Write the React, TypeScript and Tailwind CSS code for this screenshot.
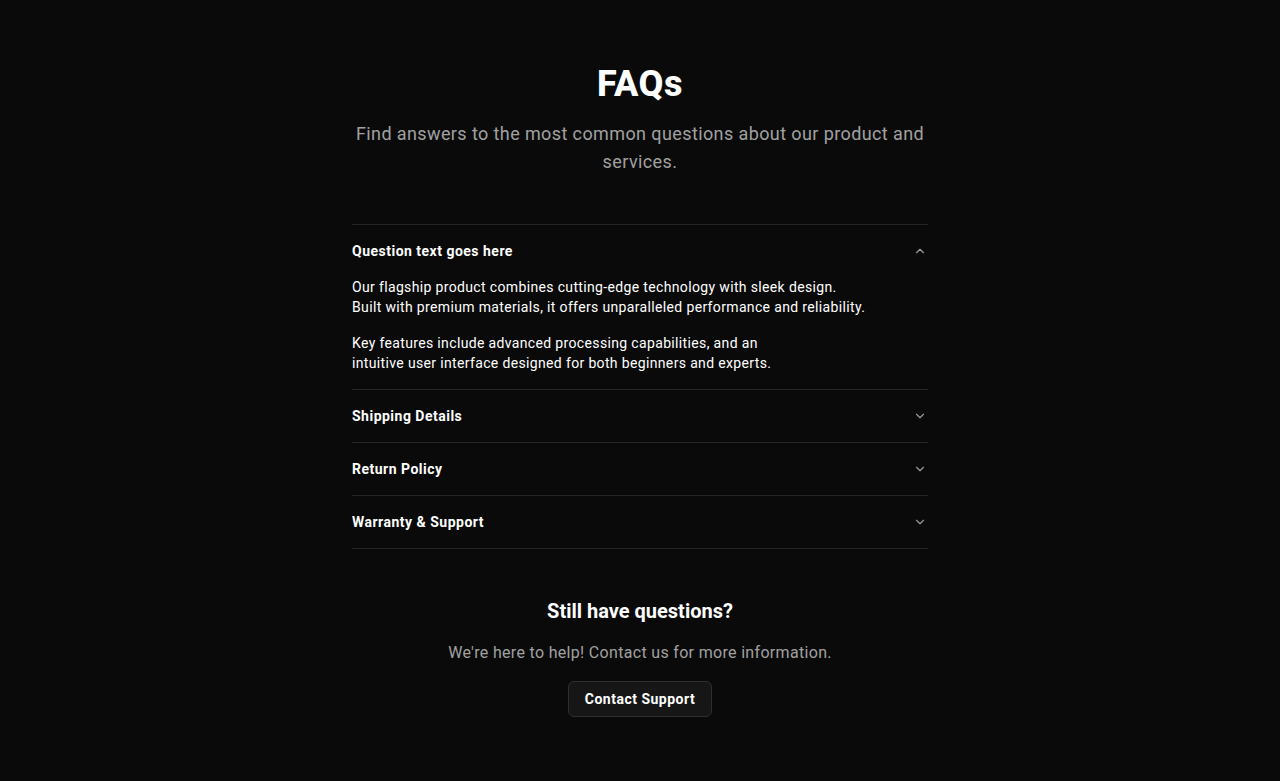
import React, { useState } from "react";
import { ChevronDown } from "lucide-react";

const items = [
  { q: "Question text goes here" },
  { q: "Shipping Details" },
  { q: "Return Policy" },
  { q: "Warranty & Support" },
];

export default function App() {
  const [open, setOpen] = useState<number | null>(0);
  return (
    <div
      className="min-h-[781px] w-full bg-[#0a0a0a] text-white"
      style={{ fontFamily: "Roboto, 'Noto Sans', sans-serif" }}
    >
      <div className="mx-auto max-w-xl pt-16 pb-16">
        <h1 className="text-center text-4xl font-extrabold leading-10 tracking-[0.015em]">FAQs</h1>
        <p className="mt-4 text-center text-lg leading-7 tracking-[0.022em] text-[#a1a1a1]">
          Find answers to the most common questions about our product and services.
        </p>
        <div className="mt-12 border-t border-[#262626]">
          {items.map((it, i) => {
            const isOpen = open === i;
            return (
              <div key={it.q} className="border-b border-[#262626]">
                <button
                  onClick={() => setOpen(isOpen ? null : i)}
                  className="flex w-full items-center justify-between py-4 text-left text-sm font-bold leading-5 tracking-[0.035em]"
                >
                  <span>{it.q}</span>
                  <ChevronDown
                    className={`mr-px h-[14px] w-[14px] text-[#9a9a9a] ${isOpen ? "rotate-180" : ""}`}
                    strokeWidth={2}
                  />
                </button>
                {isOpen && (
                  <div className="pb-4 text-sm leading-5 tracking-[0.025em] text-white">
                    <p>
                      Our flagship product combines cutting-edge technology with sleek design.
                      <br />
                      Built with premium materials, it offers unparalleled performance and reliability.
                    </p>
                    <p className="mt-4">
                      Key features include advanced processing capabilities, and an
                      <br />
                      intuitive user interface designed for both beginners and experts.
                    </p>
                  </div>
                )}
              </div>
            );
          })}
        </div>
        <div className="mt-12 flex flex-col items-center text-center">
          <h2 className="text-xl font-bold leading-7">Still have questions?</h2>
          <p className="mt-4 text-base leading-6 tracking-[0.02em] text-[#a1a1a1]">
            We're here to help! Contact us for more information.
          </p>
          <button className="mt-4 h-9 rounded-md border border-[#2e2e2e] bg-[#161616] px-4 text-sm font-bold tracking-[0.035em]">
            Contact Support
          </button>
        </div>
      </div>
    </div>
  );
}
